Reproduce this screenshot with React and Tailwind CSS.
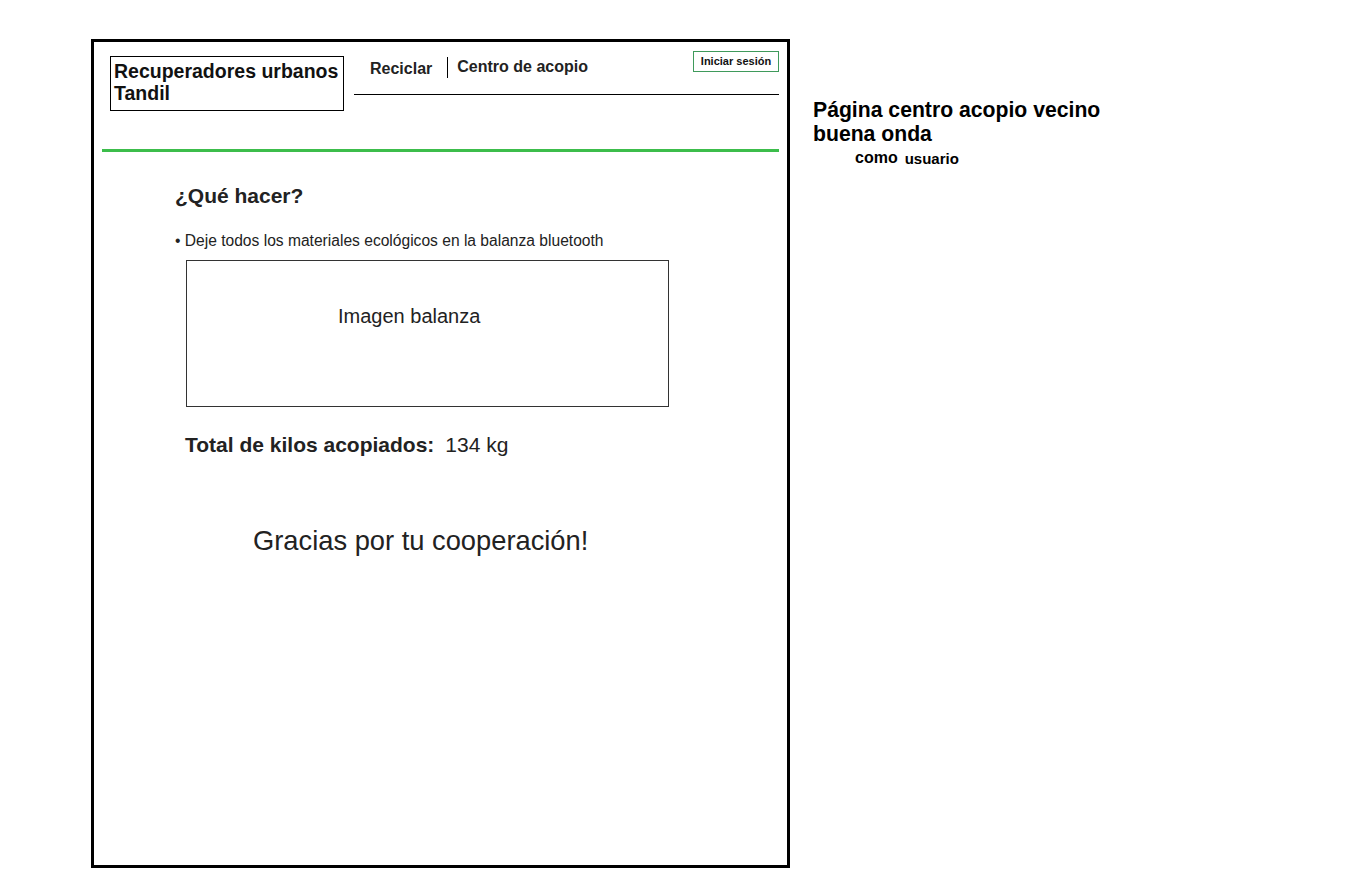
export default function App() {
  return (
    <div className="min-h-screen bg-white flex items-start pl-[91px] pt-[39px] font-['Liberation_Sans',Arial,sans-serif] text-[#222]">
      <div className="w-[699px] h-[829px] shrink-0 border-[3px] border-black px-2 flex flex-col">
        <div className="flex items-start pt-[9px]">
          <div className="ml-2 mt-[5px] w-[234px] h-[55px] border border-black pl-[3px] pt-[3px] text-[19.5px] font-bold leading-[22px] text-[#111] whitespace-nowrap">
            Recuperadores urbanos
            <br />
            Tandil
          </div>
          <div className="ml-[10px] flex-1 h-[44px] border-b border-black flex items-start">
            <span className="ml-4 mt-2 text-[16px] font-bold leading-5">Reciclar</span>
            <span className="ml-[15px] mt-[6px] h-[21px] w-px bg-black" />
            <span className="ml-[9px] mt-[6px] text-[16px] font-bold leading-5">Centro de acopio</span>
            <button className="ml-auto w-[86px] h-[21px] border border-[#3f9a5b] text-[11px] font-bold leading-[17px] text-[#111] text-center bg-white">
              Iniciar sesión
            </button>
          </div>
        </div>
        <div className="mt-[38px] h-[3px] bg-[#3cbd4b]" />
        <h2 className="ml-[73px] mt-[32px] text-[21px] font-bold leading-6">¿Qué hacer?</h2>
        <p className="ml-[73px] mt-6 text-[15.6px] leading-[18px]">• Deje todos los materiales ecológicos en la balanza bluetooth</p>
        <div className="ml-[84px] mt-[10px] w-[483px] h-[147px] border border-[#333] pl-[151px] pt-[43px] text-[20px] leading-6">
          Imagen balanza
        </div>
        <div className="ml-[83px] mt-[25px] flex items-baseline leading-[26px]">
          <span className="text-[21px] font-bold">Total de kilos acopiados:</span>
          <span className="ml-[11px] text-[21px]">134 kg</span>
        </div>
        <p className="ml-[151px] mt-[67px] text-[27.3px] leading-8">Gracias por tu cooperación!</p>
      </div>
      <div className="ml-[23px] mt-[59px] text-black">
        <h1 className="text-[21.2px] font-bold leading-6">
          Página centro acopio vecino
          <br />
          buena onda
        </h1>
        <div className="ml-[42px] mt-[2px] flex items-baseline font-bold">
          <span className="text-[16px] leading-5">como</span>
          <span className="ml-[7px] text-[15px] leading-5 relative top-[1px]">usuario</span>
        </div>
      </div>
    </div>
  );
}
